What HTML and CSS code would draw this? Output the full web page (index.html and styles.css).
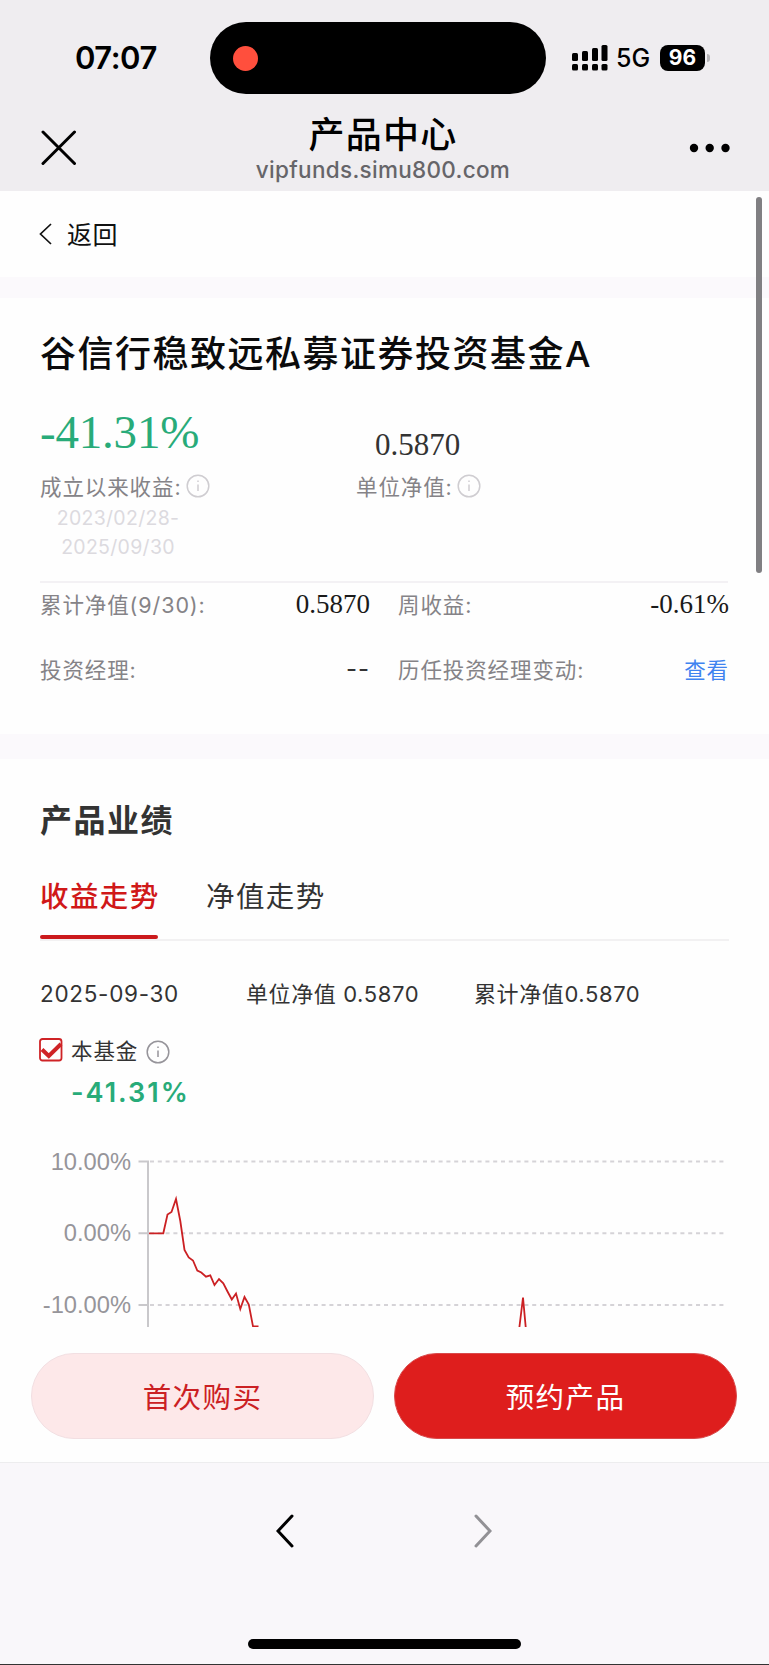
FILE: index.html
```html
<!DOCTYPE html>
<html lang="zh-CN">
<head>
  <meta charset="UTF-8" />
  <meta name="viewport" content="width=device-width, initial-scale=1.0" />
  <title>产品中心</title>
  <link rel="stylesheet" href="styles.css">
</head>
<body>
  <div class="phone">
    <header class="header">
      <div class="status-bar">
        <span class="time">07:07</span>
        <div class="island"><span class="rec-dot"></span></div>
        <svg class="signal" width="36" height="26" viewBox="0 0 36 26">
          <rect x="0" y="8" width="6" height="8" rx="1.5"/>
          <rect x="10" y="6" width="6" height="10" rx="1.5"/>
          <rect x="20" y="3" width="6" height="13" rx="1.5"/>
          <rect x="29.5" y="0" width="6" height="16" rx="1.5"/>
          <rect x="0" y="19" width="6" height="6.5" rx="1.5"/>
          <rect x="10" y="19" width="6" height="6.5" rx="1.5"/>
          <rect x="20" y="19" width="6" height="6.5" rx="1.5"/>
          <rect x="29.5" y="19" width="6" height="6.5" rx="1.5"/>
        </svg>
        <span class="network">5G</span>
        <span class="battery">96</span>
        <span class="battery-tip"></span>
      </div>
      <div class="nav-bar">
        <svg class="close" width="36" height="36" viewBox="0 0 36 36">
          <path d="M2 2L33.500 33.500M33.500 2L2 33.500"/>
        </svg>
        <div class="nav-title">
          <h1>产品中心</h1>
          <p>vipfunds.simu800.com</p>
        </div>
        <svg class="more" width="42" height="10" viewBox="0 0 42 10">
          <circle cx="5" cy="5" r="4.200"/>
          <circle cx="20.700" cy="5" r="4.200"/>
          <circle cx="36.500" cy="5" r="4.200"/>
        </svg>
      </div>
    </header>

    <div class="back">
      <svg width="13" height="22" viewBox="0 0 13 22"><path d="M12 1L1.500 11L12 21"/></svg>
      <span>返回</span>
    </div>

    <section class="summary">
      <h2>谷信行稳致远私募证券投资基金A</h2>
      <div class="figures">
        <div class="figure total">
          <strong class="green">-41.31%</strong>
          <div class="label"><span>成立以来收益:</span>
            <svg class="info" width="24" height="24" viewBox="0 0 24 24"><circle cx="12" cy="12" r="10.800"/><path d="M12 10.500V17M12 6.500V8"/></svg>
          </div>
          <div class="dates">2023/02/28-<br>2025/09/30</div>
        </div>
        <div class="figure nav">
          <strong>0.5870</strong>
          <div class="label"><span>单位净值:</span>
            <svg class="info" width="24" height="24" viewBox="0 0 24 24"><circle cx="12" cy="12" r="10.800"/><path d="M12 10.500V17M12 6.500V8"/></svg>
          </div>
        </div>
      </div>
      <div class="details">
        <div class="detail"><span>累计净值(9/30):</span><b>0.5870</b></div>
        <div class="detail"><span>周收益:</span><b>-0.61%</b></div>
        <div class="detail"><span>投资经理:</span><i class="none">--</i></div>
        <div class="detail"><span>历任投资经理变动:</span><a>查看</a></div>
      </div>
    </section>

    <section class="performance">
      <h3>产品业绩</h3>
      <div class="tabs">
        <div class="tab active">收益走势</div>
        <div class="tab">净值走势</div>
      </div>
      <div class="point">
        <span class="point-date">2025-09-30</span>
        <span class="point-nav">单位净值 0.5870</span>
        <span class="point-total">累计净值0.5870</span>
      </div>
      <div class="legend">
        <svg class="checkbox" width="24" height="24" viewBox="0 0 24 24">
          <rect x="1" y="1" width="21.500" height="21.500" rx="2.500"/>
          <path d="M3 11.500L9.800 18L22 6"/>
        </svg>
        <span>本基金</span>
        <svg class="info dark" width="24" height="24" viewBox="0 0 24 24"><circle cx="12" cy="12" r="10.800"/><path d="M12 10.500V17M12 6.500V8"/></svg>
      </div>
      <div class="legend-value">-41.31%</div>
      <!-- lower part of the chart is hidden under the buttons -->
      <svg class="chart" width="769" height="177" viewBox="0 1150 769 177">
        <g class="grid">
          <path d="M150 1161.500H724M150 1233.300H724M150 1305H724"/>
        </g>
        <g class="axis">
          <path d="M148 1160.500V1327M138.500 1161.500H148M138.500 1233.300H148M138.500 1305H148"/>
        </g>
        <g class="axis-labels">
          <text x="131" y="1169.500">10.00%</text>
          <text x="131" y="1241.300">0.00%</text>
          <text x="131" y="1313">-10.00%</text>
        </g>
        <polyline class="line" points="149,1233.300 163.300,1233.300 167.500,1214.500 171.500,1212 176,1199 180.300,1221 184.500,1250 188.700,1257.500 193,1260.500 197.300,1270.500 201.300,1272.500 206,1276.700 210.300,1275.300 214.500,1285 219,1279 223.300,1283.300 227.500,1291.500 231.800,1299.500 236,1293.500 240.300,1309 244.500,1297 248.800,1304.500 253,1326.300 258.500,1326.300"/>
        <polyline class="line" points="519.300,1328 523,1297.500 525.800,1328"/>
      </svg>
    </section>

    <div class="actions">
      <div class="btn btn-light">首次购买</div>
      <div class="btn btn-red">预约产品</div>
    </div>

    <footer class="footer">
      <div class="history">
        <svg width="18" height="34" viewBox="0 0 18 34"><path d="M16 2L2 17L16 32"/></svg>
        <svg class="disabled" width="18" height="34" viewBox="0 0 18 34"><path d="M2 2L16 17L2 32"/></svg>
      </div>
      <div class="home-bar"></div>
    </footer>

    <div class="scrollbar"></div>
  </div>
</body>
</html>
```
FILE: styles.css
```css
* {
  box-sizing: border-box;
  margin: 0;
  padding: 0;
}
body {
  font-family: Inter, "Noto Sans CJK SC", sans-serif;
  background-color: #fefefe;
  color: #333;
}
svg {
  fill: none;
  flex-shrink: 0;
}
.phone {
  position: relative;
  width: 769px;
  height: 1665px;
  overflow: hidden;
  white-space: nowrap;
}
.header {
  height: 191px;
  background: #efedf0;
  color: #000;
}
.status-bar {
  display: flex;
  align-items: center;
  height: 94px;
  padding: 22px 0 0 75px;
}
.time {
  width: 135px;
  padding-bottom: 1px;
  font-size: 31px;
  font-weight: 600;
  letter-spacing: -0.5px;
}
.island {
  display: flex;
  align-items: center;
  width: 336px;
  height: 72px;
  padding-left: 23px;
  border-radius: 36px;
  background: #000;
}
.rec-dot {
  width: 25px;
  height: 25px;
  border-radius: 50%;
  background: #ff4f3d;
}
.signal {
  margin-left: 26px;
  fill: #000;
}
.network {
  width: 43px;
  margin-left: 8px;
  font-size: 25px;
  font-weight: 500;
}
.battery {
  width: 45px;
  height: 26px;
  margin-left: 1px;
  border-radius: 8px;
  background: #000;
  color: #fff;
  font-size: 21px;
  font-weight: 700;
  line-height: 26px;
  text-align: center;
}
.battery-tip {
  width: 3px;
  height: 8px;
  margin-left: 2px;
  border-radius: 0 3px 3px 0;
  background: #b5b4b7;
}
.nav-bar {
  display: flex;
  justify-content: space-between;
  height: 97px;
  padding: 0 38px 0 41px;
}
.close {
  margin-top: 36px;
  stroke: #000;
  stroke-width: 3;
  stroke-linecap: round;
}
.nav-title {
  text-align: center;
}
.nav-title h1 {
  height: 64px;
  padding-top: 16px;
  font-size: 36px;
  font-weight: 500;
  line-height: 50px;
  letter-spacing: 1.2px;
}
.nav-title p {
  color: #666569;
  font-size: 22.5px;
  font-weight: 500;
  line-height: 24px;
  letter-spacing: 0.3px;
}
.more {
  margin-top: 49px;
  fill: #000;
}
.back {
  display: flex;
  align-items: center;
  height: 86px;
  padding-left: 39px;
  color: #111;
  font-size: 25px;
}
.back svg {
  stroke: #111;
  stroke-width: 1.7;
}
.back span {
  margin-left: 15px;
  padding-bottom: 2px;
  letter-spacing: 0.6px;
}
.summary {
  height: 482px;
  padding: 0 41px 0 40px;
  border-top: 21px solid #fbf9fc;
  border-bottom: 25px solid #fbf9fc;
}
.summary h2 {
  height: 109px;
  padding-top: 29px;
  color: #0b0b0c;
  font-size: 36px;
  font-weight: 500;
  line-height: 54px;
  letter-spacing: 1.5px;
}
.figures {
  display: flex;
  height: 176px;
  border-bottom: 2px solid #f3f1f4;
}
.figure strong {
  display: block;
  height: 65px;
  font-family: "Liberation Serif", serif;
  font-weight: 400;
}
.figure .green {
  color: #28ab79;
  font-size: 47px;
  line-height: 50px;
  letter-spacing: -0.2px;
}
.total {
  width: 316px;
}
.nav strong {
  padding-left: 19px;
  font-size: 31px;
  line-height: 75px;
}
.label {
  display: flex;
  align-items: center;
  gap: 4px;
  height: 28px;
  color: #858387;
  font-size: 21.5px;
  letter-spacing: 0.9px;
}
.label span {
  padding-bottom: 2px;
}
.info {
  stroke: #cfcdd1;
  stroke-width: 1.5;
}
.info.dark {
  stroke: #96949a;
}
.dates {
  width: 156px;
  padding-top: 4px;
  color: #dcdadf;
  font-size: 19.5px;
  line-height: 29px;
  letter-spacing: 0.3px;
  text-align: center;
}
.details {
  display: grid;
  grid-template-columns: 330px 331px;
  grid-auto-rows: 65px;
  column-gap: 28px;
  padding-top: 2px;
}
.detail {
  display: flex;
  justify-content: space-between;
  height: 40px;
  color: #858387;
  font-size: 21.5px;
  line-height: 40px;
  letter-spacing: 0.9px;
}
.detail b {
  color: #1a1a1a;
  font-family: "Liberation Serif", serif;
  font-size: 27px;
  font-weight: 400;
  line-height: 38px;
  letter-spacing: 0;
}
.detail .none {
  color: #333;
  font-size: 24px;
  font-style: normal;
  line-height: 38px;
}
.detail a {
  color: #3f83f0;
}
.performance {
  height: 568px;
}
.performance h3 {
  height: 103px;
  padding: 37px 0 0 40px;
  font-size: 32px;
  font-weight: 700;
  line-height: 50px;
  letter-spacing: 1.5px;
}
.tabs {
  display: flex;
  gap: 48px;
  height: 79px;
  margin: 0 40px;
  border-bottom: 2px solid #f2f1f2;
}
.tab {
  width: 118px;
  height: 77px;
  padding-top: 14px;
  font-size: 28.5px;
  line-height: 42px;
  letter-spacing: 1.4px;
}
.tab.active {
  color: #d01818;
  font-weight: 500;
}
.tab.active::after {
  content: "";
  display: block;
  height: 4px;
  margin-top: 17px;
  border-radius: 2px;
  background: #cb1a1c;
}
.point {
  display: flex;
  height: 88px;
  padding: 33px 0 0 40px;
  font-size: 22px;
  line-height: 40px;
  letter-spacing: 0.6px;
}
.point-date {
  width: 206px;
  font-size: 22.5px;
  letter-spacing: 0.7px;
}
.point-nav {
  width: 228px;
}
.legend {
  display: flex;
  align-items: center;
  height: 41px;
  padding-left: 39px;
  font-size: 21.5px;
  letter-spacing: 0.9px;
}
.checkbox {
  stroke: #cf2326;
  stroke-width: 1.8;
}
.checkbox path {
  stroke-width: 4;
}
.legend span {
  width: 75px;
  margin-left: 8px;
}
.legend .info {
  margin-top: 4px;
}
.legend-value {
  height: 80px;
  padding: 4px 0 0 71px;
  color: #28ab79;
  font-size: 27px;
  font-weight: 600;
  line-height: 38px;
  letter-spacing: 2px;
}
.chart {
  display: block;
}
.grid {
  stroke: #d5d3d7;
  stroke-width: 2;
  stroke-dasharray: 4 3.8;
}
.axis {
  stroke: #c9c8cb;
  stroke-width: 2;
}
.axis-labels {
  fill: #96959a;
  font-family: "Liberation Sans", sans-serif;
  font-size: 23.7px;
  text-anchor: end;
}
.line {
  stroke: #cb2023;
  stroke-width: 1.8;
}
.actions {
  display: flex;
  gap: 20px;
  height: 135px;
  padding: 26px 31px 23px;
}
.btn {
  width: 343px;
  height: 86px;
  padding-top: 2px;
  border: 1px solid #f2dfe2;
  border-radius: 43px;
  font-size: 28.5px;
  line-height: 84px;
  letter-spacing: 1.4px;
  text-align: center;
}
.btn-light {
  background: #fde8e9;
  color: #cb2023;
}
.btn-red {
  border-color: #d94a4b;
  background: #de1e1d;
  color: #fff;
}
.footer {
  height: 203px;
  border-top: 1px solid #ededee;
  border-bottom: 1px solid #333;
  background: #f9f7fa;
}
.history {
  display: flex;
  gap: 180px;
  height: 176px;
  padding: 51px 0 0 276px;
}
.history svg {
  stroke: #000;
  stroke-width: 3;
  stroke-linecap: round;
}
.history .disabled {
  stroke: #929195;
}
.home-bar {
  width: 273px;
  height: 10px;
  margin: 0 auto;
  border-radius: 5px;
  background: #000;
}
.scrollbar {
  position: absolute;
  top: 197px;
  right: 7px;
  width: 6px;
  height: 376px;
  border-radius: 3px;
  background: #807f82;
}
```
